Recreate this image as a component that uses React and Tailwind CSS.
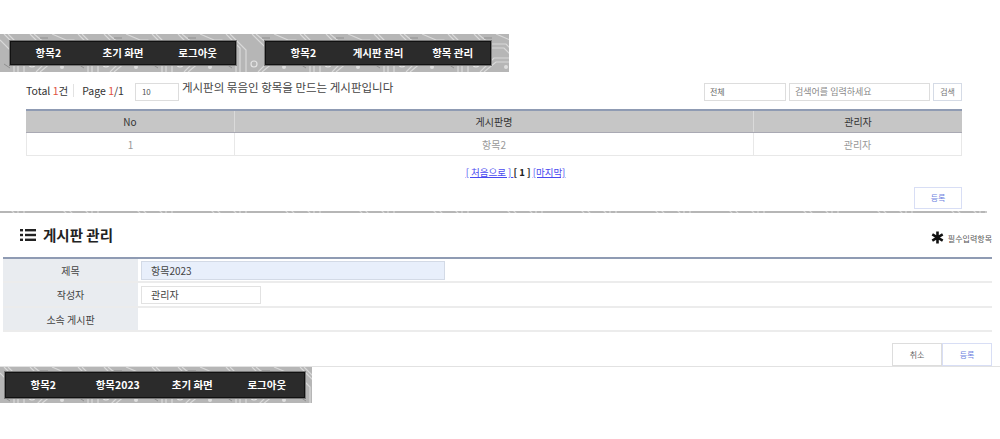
const font = { fontFamily: '"Noto Sans CJK KR", "Liberation Sans", sans-serif' };

// circuit board texture behind the menu bands
const Circuit = ({ id, className = 'inset-0 h-full' }) => (
  <svg className={`absolute left-0 w-full ${className}`} aria-hidden="true">
    <defs>
      <pattern id={id} width="74" height="38" patternUnits="userSpaceOnUse">
        <rect width="74" height="38" fill="#b6b6b6" />
        <path d="M0 6 L14 20 L14 38 M4 0 L18 14 L18 38 M8 0 L24 16 L24 38 M30 0 L44 14 L60 14 L74 28 M34 0 L46 10 L62 10 L74 22 M36 38 L50 24 L66 24 M40 38 L52 28 L68 28 M52 0 L66 6 L74 6" fill="none" stroke="#d9d9d9" strokeWidth="1.2" />
        <circle cx="32" cy="30" r="3" fill="none" stroke="#e4e4e4" strokeWidth="1.2" />
        <circle cx="62" cy="33" r="2" fill="#dedede" />
        <path d="M4 30 L10 34 M40 4 L48 4 M68 14 L72 18" stroke="#8e8e8e" strokeWidth="1" />
      </pattern>
    </defs>
    <rect width="100%" height="100%" fill={`url(#${id})`} />
  </svg>
);

const MenuBar = ({ items, className }) => (
  <div className={`relative z-10 flex items-center h-full bg-[#2b2b2b] border border-[#111] outline outline-1 outline-[#777] text-white text-[10.5px] font-bold ${className}`}>
    {items.map((t) => (
      <span key={t} className="flex-1 text-center whitespace-nowrap">{t}</span>
    ))}
  </div>
);

const Cell = ({ children, className = '' }) => (
  <div className={`flex items-center justify-center text-[10px] ${className}`}>{children}</div>
);

const FormRow = ({ label, children, className = '' }) => (
  <div className={`flex border-b-2 border-[#ececec] ${className}`}>
    <div className="w-[135px] shrink-0 flex items-center justify-center bg-[#e9ecf0] text-[10px] text-[#444]">{label}</div>
    <div className="flex-1 flex items-center pl-[3px]">{children}</div>
  </div>
);

export default function App() {
  return (
    <div style={font} className="w-[1000px] h-[439px] overflow-hidden bg-white flex flex-col text-[#333]">
      {/* top menu band */}
      <div className="relative w-[509px] h-[38px] mt-[34px] flex gap-[29px] pl-[10px] py-[7px] shrink-0">
        <Circuit id="c1" />
        <MenuBar className="w-[226px]" items={['항목2', '초기 화면', '로그아웃']} />
        <MenuBar className="w-[226px]" items={['항목2', '게시판 관리', '항목 관리']} />
      </div>

      {/* list toolbar */}
      <div className="flex items-start h-[37px] pl-[26px] pr-[38px] pt-[10px] shrink-0">
        <span className="text-[10.5px] mt-[1px] text-[#333]">Total <span className="text-[#e0533f]">1</span>건</span>
        <span className="w-px h-[13px] bg-[#e2e2e2] ml-[5px] mr-[8px] mt-[2px]" />
        <span className="text-[10.5px] mt-[1px] text-[#333]">Page <span className="text-[#e0533f]">1</span>/1</span>
        <div className="w-[44px] h-[18px] ml-[11px] mt-[1px] border border-[#ddd] text-[8px] flex items-center pl-[6px] text-[#555]">10</div>
        <span className="text-[11.5px] ml-[3px] -mt-[3px] text-[#444]">게시판의 묶음인 항목을 만드는 게시판입니다</span>
        <div className="ml-auto flex gap-[3px] mt-[1px]">
          <div className="w-[82px] h-[18px] border border-[#ddd] text-[8px] flex items-center pl-[5px] text-[#666]">전체</div>
          <div className="w-[141px] h-[18px] border border-[#ddd] text-[9px] flex items-center pl-[5px] text-[#888]">검색어를 입력하세요</div>
          <div className="w-[29px] h-[18px] border border-[#d5dbe6] text-[8px] flex items-center justify-center text-[#777]">검색</div>
        </div>
      </div>

      {/* list table */}
      <div className="ml-[26px] w-[936px] shrink-0">
        <div className="flex h-[24px] bg-[#c6c6c6] border-t-2 border-b border-t-[#8f9bb3] border-b-[#a9a9b3] text-[#333]">
          <Cell className="w-[209px] border-r border-[#dadada]">No</Cell>
          <Cell className="w-[519px] border-r border-[#dadada]">게시판명</Cell>
          <Cell className="flex-1">관리자</Cell>
        </div>
        <div className="flex h-[23px] border border-t-0 border-[#e8e8e8] text-[#999]">
          <Cell className="w-[208px] border-r border-[#e8e8e8]">1</Cell>
          <Cell className="w-[519px] border-r border-[#e8e8e8]">항목2</Cell>
          <Cell className="flex-1">관리자</Cell>
        </div>
      </div>

      {/* pager */}
      <div className="h-[32px] flex items-center justify-center text-[9.5px] shrink-0 w-[1031px]">
        <a className="text-[#4a4af0] underline whitespace-pre">[ 처음으로 ] </a>
        <span className="font-bold text-[#222] whitespace-pre">[ 1 ] </span>
        <a className="text-[#4a4af0] underline">[마지막]</a>
      </div>

      <div className="flex justify-end pr-[38px] -mt-px shrink-0">
        <div className="w-[48px] h-[22px] border border-[#d8def5] flex items-center justify-center text-[8px] text-[#6d7fe0]">등록</div>
      </div>

      {/* textured divider */}
      <div className="relative w-[987px] h-[2px] mt-[2px] shrink-0 overflow-hidden"><Circuit id="c2" className="-top-[18px] h-[38px]" /></div>

      {/* form heading */}
      <div className="flex items-center h-[44px] pl-[20px] pr-[8px] shrink-0">
        <svg width="16" height="12" viewBox="0 0 16 12" className="shrink-0">
          <rect x="0" y="0" width="3" height="2.4" fill="#222" />
          <rect x="0" y="4.8" width="3" height="2.4" fill="#222" />
          <rect x="0" y="9.6" width="3" height="2.4" fill="#222" />
          <rect x="5" y="0" width="11" height="2.4" fill="#222" />
          <rect x="5" y="4.8" width="11" height="2.4" fill="#222" />
          <rect x="5" y="9.6" width="11" height="2.4" fill="#222" />
        </svg>
        <span className="ml-[7px] text-[14.5px] font-bold text-[#222]">게시판 관리</span>
        <svg width="13" height="13" viewBox="0 0 12 12" className="ml-auto mt-[5px]">
          <path d="M6 0.5 V11.5 M1.2 3.2 L10.8 8.8 M10.8 3.2 L1.2 8.8" stroke="#111" strokeWidth="2.4" />
        </svg>
        <span className="ml-[4px] mt-[7px] text-[8px] text-[#555] whitespace-nowrap">필수입력항목</span>
      </div>

      {/* form table */}
      <div className="ml-[3px] w-[989px] border-t-2 border-[#8f9bb3] shrink-0">
        <FormRow label="제목" className="h-[24px]">
          <div className="w-[304px] h-[19px] bg-[#e8effb] border border-[#d3dae6] text-[10px] flex items-center pl-[9px] text-[#444]">항목2023</div>
        </FormRow>
        <FormRow label="작성자" className="h-[25px]">
          <div className="w-[120px] h-[18px] border border-[#e2e2e2] text-[10px] flex items-center pl-[9px] text-[#444]">관리자</div>
        </FormRow>
        <FormRow label="소속 게시판" className="h-[24px]" />
      </div>

      {/* form buttons */}
      <div className="flex justify-end h-[34px] pr-[8px] pt-[11px] shrink-0">
        <div className="w-[50px] h-[23px] border border-[#ddd] flex items-center justify-center text-[8px] text-[#666]">취소</div>
        <div className="w-[50px] h-[23px] border border-[#d8def5] flex items-center justify-center text-[8px] text-[#6d7fe0]">등록</div>
      </div>
      <div className="h-px bg-[#e2e2e2] shrink-0" />

      {/* bottom menu band */}
      <div className="relative w-[312px] h-[36px] px-[5px] py-[5px] shrink-0">
        <Circuit id="c3" />
        <MenuBar className="w-[300px]" items={['항목2', '항목2023', '초기 화면', '로그아웃']} />
      </div>
    </div>
  );
}
